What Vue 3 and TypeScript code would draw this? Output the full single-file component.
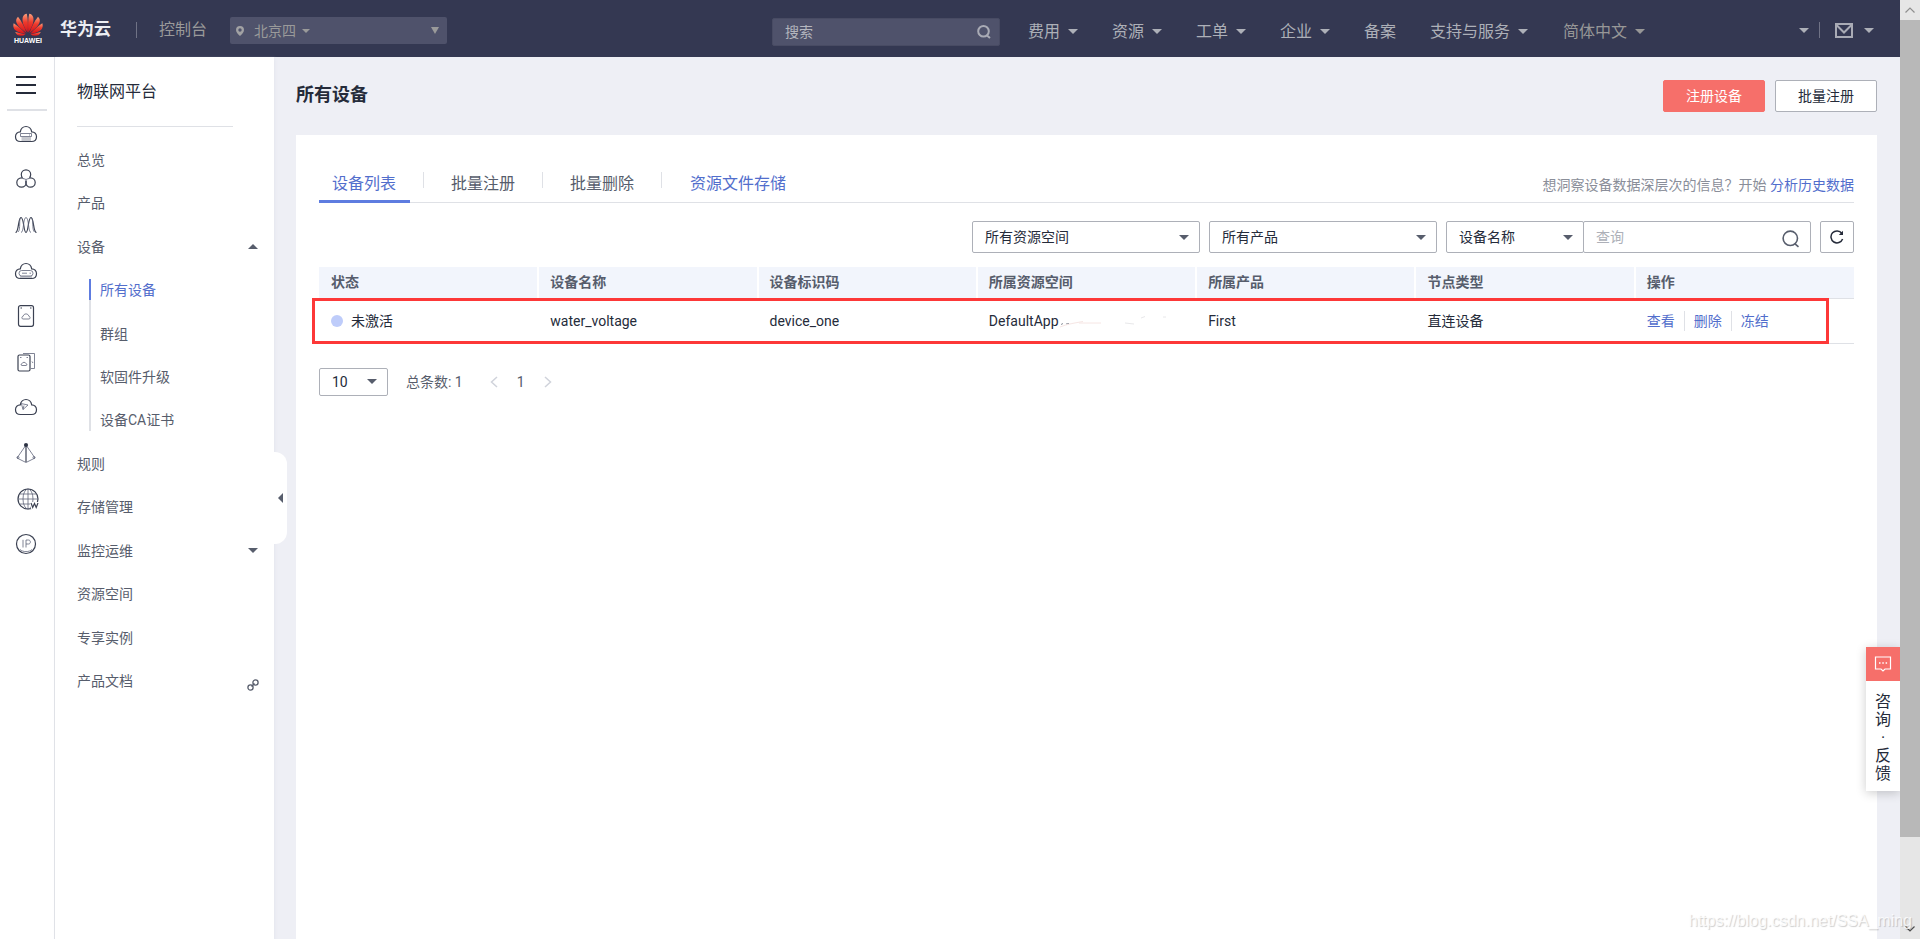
<script setup lang="ts">
import { ref } from 'vue'

interface NavItem {
  label: string
  menu: boolean
}

interface SideItem {
  label: string
  icon?: 'down' | 'link'
}

interface Device {
  status: string
  name: string
  code: string
  space: string
  product: string
  nodeType: string
}

const navItems: NavItem[] = [
  { label: '费用', menu: true },
  { label: '资源', menu: true },
  { label: '工单', menu: true },
  { label: '企业', menu: true },
  { label: '备案', menu: false },
  { label: '支持与服务', menu: true },
]

const topItems: SideItem[] = [{ label: '总览' }, { label: '产品' }]
const deviceItems: string[] = ['所有设备', '群组', '软固件升级', '设备CA证书']
const bottomItems: SideItem[] = [
  { label: '规则' },
  { label: '存储管理' },
  { label: '监控运维', icon: 'down' },
  { label: '资源空间' },
  { label: '专享实例' },
  { label: '产品文档', icon: 'link' },
]

const tabs: string[] = ['设备列表', '批量注册', '批量删除']
const activeTab = ref('设备列表')

const columns: string[] = ['状态', '设备名称', '设备标识码', '所属资源空间', '所属产品', '节点类型', '操作']
const devices: Device[] = [
  { status: '未激活', name: 'water_voltage', code: 'device_one', space: 'DefaultApp', product: 'First', nodeType: '直连设备' },
]
const actions: string[] = ['查看', '删除', '冻结']

const keyword = ref('')
const query = ref('')
</script>

<template>
  <div class="page">
    <div class="app">
      <header class="topbar">
        <a class="logo" href="#" aria-label="HUAWEI">
          <svg class="petals" viewBox="0 0 30 23" aria-hidden="true">
            <defs>
              <linearGradient id="petal" x1="0" y1="0" x2="0" y2="1">
                <stop offset="0" stop-color="#f9a07c" />
                <stop offset="0.45" stop-color="#ee3a2c" />
                <stop offset="1" stop-color="#d5121b" />
              </linearGradient>
            </defs>
            <g fill="url(#petal)">
              <path d="M14.7 19.5C10 13 9 8 9.700 4.500C10.200 2 12 .9 13.800 .7C15 6 15.200 13 14.700 19.500Z" />
              <path d="M15.300 19.500C20 13 21 8 20.300 4.500C19.800 2 18 .9 16.200 .7C15 6 14.800 13 15.300 19.500Z" />
              <path d="M13.600 20C11.500 14 8.500 8 5 3.800C3 5.500 2.500 8 4 10.800C6 14.500 10 17.500 13.600 20Z" />
              <path d="M16.400 20C18.500 14 21.500 8 25 3.800C27 5.500 27.500 8 26 10.800C24 14.500 20 17.500 16.400 20Z" />
              <path d="M12.800 20.700C9 16.500 5 13 .7 10.300C-.2 13 .3 15.500 2.800 17.500C5.500 19.500 9 20.500 12.800 20.700Z" />
              <path d="M17.200 20.700C21 16.500 25 13 29.300 10.300C30.200 13 29.700 15.500 27.200 17.500C24.500 19.500 21 20.500 17.200 20.700Z" />
              <path d="M12.500 21.400C9 20.700 5.500 20 2.200 19C3.500 21.800 5.500 23 8 22.800C9.800 22.600 11.300 22.200 12.500 21.400Z" />
              <path d="M17.500 21.400C21 20.700 24.500 20 27.800 19C26.500 21.800 24.500 23 22 22.800C20.200 22.600 18.700 22.200 17.500 21.400Z" />
            </g>
          </svg>
          <span class="logo-text">HUAWEI</span>
        </a>
        <span class="brand">华为云</span>
        <span class="divider"></span>
        <a class="console" href="#">控制台</a>
        <label class="region">
          <svg class="pin" viewBox="0 0 8 10" aria-hidden="true">
            <path fill-rule="evenodd" d="M4 0a4 4 0 0 1 4 4c0 2.300-2.200 4.600-4 6C2.200 8.600 0 6.300 0 4a4 4 0 0 1 4-4Zm0 2.300a1.700 1.700 0 1 0 0 3.400a1.700 1.700 0 0 0 0-3.400Z" />
          </svg>
          <select aria-label="区域">
            <option>北京四</option>
          </select>
          <i class="caret region-inner"></i>
          <i class="caret big region-outer"></i>
        </label>

        <div class="search">
          <input v-model="keyword" type="text" placeholder="搜索" aria-label="搜索" />
          <button type="button" aria-label="执行搜索">
            <svg viewBox="0 0 14 14" aria-hidden="true">
              <circle cx="6.500" cy="6.300" r="5.300" />
              <path d="M10 10.500L13 13" />
            </svg>
          </button>
        </div>

        <nav class="topnav">
          <a v-for="item in navItems" :key="item.label" href="#">{{ item.label }}<i v-if="item.menu" class="caret"></i></a>
          <a class="lang" href="#">简体中文<i class="caret"></i></a>
        </nav>

        <div class="account">
          <button type="button" aria-label="账号"><i class="caret"></i></button>
          <span class="divider"></span>
          <button type="button" class="mail" aria-label="消息">
            <svg viewBox="0 0 18 15" aria-hidden="true">
              <path d="M1 1H17V14H1ZM1 1.500L9 9.500L17 1.500" />
            </svg>
            <i class="caret"></i>
          </button>
        </div>
      </header>

      <div class="body">
        <aside class="rail">
          <button class="burger" type="button" aria-label="服务列表"><i></i><i></i><i></i></button>
          <ul class="rail-list">
            <li><a href="#" aria-label="云服务器">
              <svg viewBox="0 0 24 24">
                <path d="M6.500 19.500C3.500 19.500 1.500 17.500 1.500 14.700C1.500 12 3.500 9.900 6.300 9.800C6.800 6.800 9.200 4.500 12 4.500S17.200 6.800 17.700 9.800C20.500 9.900 22.500 12 22.500 14.700C22.500 17.500 20.500 19.500 17.500 19.500Z" />
                <path class="fill" d="M7.500 15H17V19H7.500Z" />
                <path class="thin" d="M6.500 11.500H17.500V14.500H6.500Z M15 13H16" />
              </svg>
            </a></li>
            <li><a href="#" aria-label="容器">
              <svg viewBox="0 0 24 24">
                <circle cx="12" cy="7.500" r="4.700" /><circle cx="7.500" cy="15.500" r="4.700" /><circle cx="16.500" cy="15.500" r="4.700" />
                <path class="mask" d="M9 9.500H15L15.500 12L12 14L8.500 12Z" />
                <path class="thin" d="M12 12.500V18M7.500 10.700L12 12.500L16.500 10.700" />
              </svg>
            </a></li>
            <li><a href="#" aria-label="弹性伸缩">
              <svg viewBox="0 0 24 24">
                <path d="M1.500 19.500C5 19.500 4 4.500 7 4.500S9.500 19.500 12 19.500S14 4.500 17 4.500S19 19.500 22.500 19.500" />
                <path class="thin" d="M4 19C7 17 4.500 4.500 7 4.500M7 19.500C10 19.500 9 4.500 12 4.500S14 19.500 17 19.500M17 4.500C20 5 17.500 17 20.500 19" />
              </svg>
            </a></li>
            <li><a href="#" aria-label="裸金属服务器">
              <svg viewBox="0 0 24 24">
                <path d="M6.500 19.500C3.500 19.500 1.500 17.500 1.500 14.700C1.500 12 3.500 9.900 6.300 9.800C6.800 6.800 9.200 4.500 12 4.500S17.200 6.800 17.700 9.800C20.500 9.900 22.500 12 22.500 14.700C22.500 17.500 20.500 19.500 17.500 19.500Z" />
                <rect class="thin" x="5" y="11.500" width="14" height="5.500" rx="2.700" />
                <path class="thin" d="M8 14.200H13M15.500 14.200H17M6 18H18" />
              </svg>
            </a></li>
            <li><a href="#" aria-label="云硬盘">
              <svg viewBox="0 0 24 24">
                <rect x="4.500" y="1.700" width="15" height="20.600" rx="2" />
                <path class="thin" d="M9 15C7.500 15 7.500 12.300 9.300 12.100C9.600 9.200 14.400 9.200 14.700 12.100C16.500 12.300 16.500 15 15 15Z" />
                <path d="M6.500 4H8M16 4H17.500" />
              </svg>
            </a></li>
            <li><a href="#" aria-label="云备份">
              <svg viewBox="0 0 24 24">
                <rect x="4" y="5" width="12" height="16" rx="1.500" />
                <path class="thin" d="M9 3.500H20.500V18.500H17M18 11.500L19 13" />
                <path class="thin" d="M8 15.500C6.800 15.500 6.800 13.800 8 13.700C8.300 11.800 11.700 11.800 12 13.700C13.200 13.800 13.200 15.500 12 15.500Z" />
                <path class="thin" d="M6 7.500H7.500M12.500 7.500H14" />
              </svg>
            </a></li>
            <li><a href="#" aria-label="云加速">
              <svg viewBox="0 0 24 24">
                <path d="M6.500 19.500C3.500 19.500 1.500 17.500 1.500 14.700C1.500 12 3.500 9.900 6.300 9.800C6.800 6.800 9.200 4.500 12 4.500S17.200 6.800 17.700 9.800C20.500 9.900 22.500 12 22.500 14.700C22.500 17.500 20.500 19.500 17.500 19.500Z" />
                <path class="thin" d="M7 8.500L14 10L9 14.500L7.500 9M9 14.500L10 10.500" />
              </svg>
            </a></li>
            <li><a href="#" aria-label="虚拟私有云">
              <svg viewBox="0 0 24 24">
                <path class="thin" d="M12 4L3 17L12 21.500L21 17Z" />
                <path d="M12 4V21" />
                <circle class="solid" cx="12" cy="4" r="1.500" />
                <circle class="thin" cx="4" cy="16.500" r="1" /><circle class="thin" cx="20" cy="16.500" r="1" />
              </svg>
            </a></li>
            <li><a class="shift" href="#" aria-label="域名">
              <svg viewBox="0 0 24 24">
                <circle cx="12" cy="12" r="10" />
                <ellipse class="thin" cx="12" cy="12" rx="5" ry="10" />
                <path class="thin" d="M12 2V22M2 12H22M4 7H20M4 17H14" />
                <path class="mask" d="M14 15H23V22H15Z" />
                <path d="M15 16L16.700 20.500L18.500 16.500L20.200 20.500L22 16" />
              </svg>
            </a></li>
            <li><a href="#" aria-label="弹性公网IP">
              <svg viewBox="0 0 24 24">
                <circle cx="12" cy="12" r="9.500" />
                <path class="thin" d="M9 7.800V15.500M12 15.500V8H14.500C17 8 17 12 14.500 12H12M6 17.500C9 20.300 15 20.300 18 17.500" />
              </svg>
            </a></li>
          </ul>
        </aside>

        <aside class="side">
          <h2>物联网平台</h2>
          <ul class="menu">
            <li v-for="item in topItems" :key="item.label"><a href="#">{{ item.label }}</a></li>
            <li class="group">
              <a href="#">设备<i class="caret up"></i></a>
              <ul class="submenu">
                <li v-for="(item, i) in deviceItems" :key="item" :class="{ active: i === 0 }"><a href="#">{{ item }}</a></li>
              </ul>
            </li>
            <li v-for="item in bottomItems" :key="item.label">
              <a href="#">{{ item.label }}
                <i v-if="item.icon === 'down'" class="caret"></i>
                <svg v-if="item.icon === 'link'" class="link-icon" viewBox="0 0 12 12" aria-hidden="true">
                  <circle cx="3.500" cy="8.500" r="2.600" /><circle cx="8.500" cy="3.500" r="2.600" /><path d="M4.500 7.500L7.500 4.500" />
                </svg>
              </a>
            </li>
          </ul>
          <button class="collapse" type="button" aria-label="收起菜单"><i></i></button>
        </aside>

        <main>
          <div class="title-row">
            <h1>所有设备</h1>
            <button class="btn primary" type="button">注册设备</button>
            <button class="btn" type="button">批量注册</button>
          </div>

          <section class="card">
            <div class="tabs">
              <template v-for="tab in tabs" :key="tab">
                <button type="button" :class="{ active: tab === activeTab }" @click="activeTab = tab">{{ tab }}</button>
                <span class="tab-sep"></span>
              </template>
              <a href="#">资源文件存储</a>
              <p>想洞察设备数据深层次的信息？开始 <a href="#">分析历史数据</a></p>
            </div>

            <div class="filters">
              <label class="select wide">
                <select aria-label="资源空间"><option>所有资源空间</option></select><i class="caret"></i>
              </label>
              <label class="select wide">
                <select aria-label="产品"><option>所有产品</option></select><i class="caret"></i>
              </label>
              <div class="combo">
                <label class="select">
                  <select aria-label="查询字段"><option>设备名称</option></select><i class="caret"></i>
                </label>
                <div class="query">
                  <input v-model="query" type="text" placeholder="查询" aria-label="查询" />
                  <button type="button" aria-label="查询设备">
                    <svg viewBox="0 0 18 18" aria-hidden="true"><circle cx="8.300" cy="8.300" r="7.200" /><path d="M13 13.800L16.500 16.800" /></svg>
                  </button>
                </div>
              </div>
              <button class="refresh" type="button" aria-label="刷新">
                <svg viewBox="0 0 14 14" aria-hidden="true"><path d="M11.800 3.300A6 6 0 1 0 12.600 9" /><path class="tip" d="M13 .8V5H8.800Z" /></svg>
              </button>
            </div>

            <div class="table-wrap">
              <table>
                <thead>
                  <tr><th v-for="column in columns" :key="column" scope="col">{{ column }}</th></tr>
                </thead>
                <tbody>
                  <tr v-for="device in devices" :key="device.code">
                    <td><span class="dot"></span>{{ device.status }}</td>
                    <td>{{ device.name }}</td>
                    <td>{{ device.code }}</td>
                    <td>
                      <span class="space">{{ device.space }}<svg viewBox="0 0 120 18" aria-hidden="true">
                        <path stroke="#8b8f99" d="M2 12.500L4 11.500M7 12L10 11.500" />
                        <path stroke="#f6e6e4" d="M1 15C8 12 16 11 24 9.500M20 11L42 11" />
                        <path stroke="#e8e8ea" d="M66 11L75 12M82 6L86 4.500M104 5L107 5" />
                      </svg></span>
                    </td>
                    <td>{{ device.product }}</td>
                    <td>{{ device.nodeType }}</td>
                    <td><span class="actions"><a v-for="action in actions" :key="action" href="#">{{ action }}</a></span></td>
                  </tr>
                </tbody>
              </table>
              <div class="highlight"></div>
            </div>

            <div class="pager">
              <label class="select small">
                <select aria-label="每页条数"><option>10</option></select><i class="caret"></i>
              </label>
              <span class="total">总条数: 1</span>
              <button type="button" aria-label="上一页"><svg viewBox="0 0 8 12"><path d="M7 1L1.500 6L7 11" /></svg></button>
              <button type="button" class="num">1</button>
              <button type="button" aria-label="下一页"><svg viewBox="0 0 8 12"><path d="M1 1L6.500 6L1 11" /></svg></button>
            </div>
          </section>
        </main>
      </div>

      <aside class="feedback">
        <button type="button" aria-label="咨询">
          <svg viewBox="0 0 18 16" aria-hidden="true">
            <path d="M1.500 1H16.500V13H11L9 15L7 13H1.500Z" /><path class="dots" d="M5 7H6.500M8.300 7H9.800M11.600 7H13.100" />
          </svg>
        </button>
        <a href="#"><span>咨</span><span>询</span><span>·</span><span>反</span><span>馈</span></a>
      </aside>
    </div>

    <div class="scrollbar" aria-hidden="true">
      <svg viewBox="0 0 12 8"><path d="M1.500 6.500L6 2L10.500 6.500" /></svg>
      <div class="thumb"></div>
      <div class="track"></div>
      <svg viewBox="0 0 12 8"><path class="dark" d="M1.500 1.500L6 6L10.500 1.500" /></svg>
    </div>
    <div class="watermark">https://blog.csdn.net/SSA_ming</div>
  </div>
</template>

<style>
html,
body {
  margin: 0;
  overflow: hidden;
}
</style>

<style scoped>
.page {
  position: relative;
  display: flex;
  height: 100vh;
  min-width: 1400px;
  overflow: hidden;
  background: #eeeff5;
  color: #252b3a;
  font: 14px/20px Roboto, "Noto Sans CJK SC", sans-serif;
}
*,
*::before {
  box-sizing: border-box;
}
a {
  color: inherit;
  text-decoration: none;
}
button,
input,
select {
  margin: 0;
  padding: 0;
  border: 0;
  background: none;
  color: inherit;
  font: inherit;
}
select {
  appearance: none;
}
ul {
  margin: 0;
  padding: 0;
  list-style: none;
}
svg {
  display: block;
  fill: none;
}
.caret {
  flex: none;
  border: 5px solid transparent;
  border-top-color: currentColor;
  border-bottom: 0;
}
.caret.big {
  border-top-width: 7px;
}
.caret.up {
  border-top: 0;
  border-bottom: 5px solid currentColor;
}
.app {
  position: relative;
  display: flex;
  flex: 1;
  flex-direction: column;
}

/* Top bar */
.topbar {
  display: flex;
  align-items: center;
  height: 57px;
  padding: 0 26px 0 13px;
  background: #343852;
  color: #adb0b8;
  font-size: 16px;
}
.logo {
  display: flex;
  flex-direction: column;
  align-items: center;
  width: 30px;
}
.petals {
  width: 30px;
  height: 23px;
}
.logo-text {
  color: #fff;
  font: bold 7px/9px "Liberation Sans", sans-serif;
}
.brand {
  margin-left: 17px;
  color: #eceef2;
  font-size: 17px;
  font-weight: 700;
}
.divider {
  width: 1px;
  height: 16px;
  background: #6f7285;
}
.brand + .divider {
  margin: 2px 22px 0 25px;
}
.console {
  margin-top: 2px;
  color: #9a9a9a;
}
.region {
  position: relative;
  display: flex;
  align-items: center;
  width: 217px;
  height: 27px;
  margin: 4px 0 0 23px;
  border-radius: 2px;
  background: #4f526b;
  color: #9a9a9a;
  font-size: 14px;
}
.region select {
  width: 100%;
  height: 27px;
  padding-left: 24px;
}
.pin {
  position: absolute;
  left: 6px;
  width: 8px;
  height: 10px;
  fill: #a2a2a4;
}
.region-inner {
  position: absolute;
  left: 72px;
  border-width: 4px 4px 0;
}
.region-outer {
  position: absolute;
  right: 8px;
  border-width: 7px 4px 0;
}
.search {
  display: flex;
  width: 228px;
  height: 28px;
  margin: 6px 0 0 auto;
  border: 1px solid #484b63;
  border-radius: 2px;
  background: #4f526b;
  font-size: 14px;
}
.search input {
  flex: 1;
  min-width: 0;
  padding-left: 12px;
}
.search input::placeholder {
  color: #b4b6be;
}
.search button {
  width: 29px;
}
.search svg {
  width: 14px;
  height: 14px;
  margin-left: 7px;
  stroke: #a9abb5;
  stroke-width: 2;
}
.topnav {
  display: flex;
  gap: 34px;
  margin: 6px 0 0 28px;
}
.topnav a {
  display: flex;
  align-items: center;
  gap: 8px;
}
.topnav .lang {
  margin-left: 1px;
  color: #979797;
}
.account {
  display: flex;
  align-items: center;
  gap: 10px;
  margin: 3px 0 0 154px;
}
.mail {
  display: flex;
  align-items: center;
  gap: 11px;
  margin-left: 5px;
}
.account button {
  display: flex;
  align-items: center;
}
.mail svg {
  width: 18px;
  height: 15px;
  stroke: #a9abb5;
  stroke-width: 2;
}

.body {
  display: flex;
  flex: 1;
  min-height: 0;
}

/* Icon rail */
.rail {
  width: 55px;
  border-right: 1px solid #dfe1e6;
  background: #fff;
}
.burger {
  display: flex;
  flex-direction: column;
  justify-content: center;
  gap: 6px;
  width: 40px;
  height: 54px;
  margin: 0 7px;
  padding: 4px 9px 0;
  border-bottom: 2px solid #dfe1e6;
}
.burger i {
  width: 20px;
  height: 2px;
  background: #252b3a;
}
.rail-list {
  display: grid;
  grid-auto-rows: 1fr;
  height: 456px;
}
.rail-list li {
  display: flex;
  align-items: center;
  padding-left: 14px;
}
.rail-list .shift {
  padding-left: 2px;
}
.rail-list svg {
  width: 24px;
  height: 24px;
  stroke: #3b4152;
  stroke-width: 1.2;
}
.rail-list .thin {
  stroke: #60657a;
  stroke-width: 0.8;
}
.rail-list .fill {
  fill: #c6c8ce;
  stroke: none;
}
.rail-list .mask {
  fill: #fff;
  stroke: none;
}
.rail-list .solid {
  fill: #252b3a;
}

/* Side menu */
.side {
  position: relative;
  width: 219px;
  padding: 0 17px 0 22px;
  background: #fff;
  box-shadow: 1px 2px 3px #e4e6ee;
}
.side h2 {
  height: 70px;
  margin: 0 24px 0 0;
  padding-top: 25px;
  border-bottom: 1px solid #dfe1e6;
  font-size: 16px;
  font-weight: 400;
  line-height: 20px;
}
.menu {
  display: grid;
  grid-auto-rows: 1fr;
  height: 565px;
  margin-top: 11px;
  color: #575d6c;
}
.menu a {
  display: flex;
  align-items: center;
  justify-content: space-between;
  height: 100%;
}
.group {
  display: grid;
  grid-row: span 5;
  grid-template-rows: 1fr 4fr;
}
.submenu {
  position: relative;
  display: grid;
  grid-auto-rows: 1fr;
  margin-left: 12px;
}
.submenu::before {
  position: absolute;
  top: 11px;
  bottom: 11px;
  width: 2px;
  background: #dfe1e6;
  content: "";
}
.submenu li {
  position: relative;
  padding-left: 11px;
}
.submenu .active {
  color: #526ecc;
}
.submenu .active::before {
  position: absolute;
  top: 11px;
  left: 0;
  width: 2px;
  height: 21px;
  background: #5e7ce0;
  content: "";
}
.menu .caret {
  margin-right: -1px;
}
.link-icon {
  width: 12px;
  height: 12px;
  margin: 8px -2px 0 0;
  stroke: #575d6c;
  stroke-width: 1.3;
}
.collapse {
  position: absolute;
  z-index: 1;
  top: 395px;
  left: 100%;
  width: 13px;
  height: 92px;
  border-radius: 0 12px 12px 0;
  background: #fff;
}
.collapse i {
  display: block;
  width: 0;
  margin-left: 4px;
  border: 5px solid transparent;
  border-right-color: #575d6c;
  border-left: 0;
}

/* Content */
main {
  display: flex;
  flex: 1;
  flex-direction: column;
  min-width: 0;
  padding: 0 23px 0 22px;
}
.title-row {
  display: flex;
  align-items: center;
  gap: 10px;
  height: 78px;
}
h1 {
  margin: 0 auto 2px 0;
  font-size: 18px;
  line-height: 26px;
}
.btn {
  width: 102px;
  height: 32px;
  border: 1px solid #adb0b8;
  border-radius: 2px;
  background: #fff;
}
.btn.primary {
  border-color: #f66f6a;
  background: #f66f6a;
  color: #fff;
}
.card {
  flex: 1;
  padding: 25px 23px;
  background: #fff;
}
.tabs {
  display: flex;
  align-items: center;
  height: 43px;
  border-bottom: 1px solid #dfe1e6;
  color: #575d6c;
  font-size: 16px;
}
.tabs button {
  height: 43px;
  padding: 8px 14px 0 13px;
  border-bottom: 3px solid transparent;
}
.tabs button.active {
  border-color: #5e7ce0;
  color: #526ecc;
}
.tab-sep {
  width: 1px;
  height: 16px;
  margin: 0 14px 2px 13px;
  background: #dfe1e6;
}
.tabs > a {
  padding: 6px 14px 0;
  color: #526ecc;
}
.tabs p {
  margin: 8px 0 0 auto;
  color: #8a8e99;
  font-size: 14px;
}
.tabs p a {
  color: #526ecc;
}
.filters {
  display: flex;
  justify-content: flex-end;
  gap: 9px;
  margin: 18px 0 14px;
}
.select {
  position: relative;
  display: flex;
  align-items: center;
  width: 138px;
  height: 32px;
  border: 1px solid #adb0b8;
  border-radius: 2px;
  background: #fff;
}
.select select {
  width: 100%;
  height: 100%;
  padding-left: 12px;
}
.select .caret {
  position: absolute;
  right: 10px;
  color: #575d6c;
}
.select.wide {
  width: 228px;
}
.select.small {
  width: 69px;
  height: 28px;
}
.combo {
  display: flex;
}
.query {
  display: flex;
  width: 228px;
  height: 32px;
  margin-left: -1px;
  border: 1px solid #adb0b8;
  border-radius: 2px;
}
.query input {
  flex: 1;
  min-width: 0;
  padding-left: 12px;
}
.query input::placeholder {
  color: #adb0b8;
}
.query button {
  width: 32px;
  padding-top: 3px;
}
.query svg {
  width: 18px;
  height: 18px;
  margin-left: 4px;
  stroke: #575d6c;
  stroke-width: 1.600;
}
.refresh {
  display: flex;
  align-items: center;
  justify-content: center;
  width: 34px;
  height: 32px;
  border: 1px solid #adb0b8;
  border-radius: 2px;
}
.refresh svg {
  width: 14px;
  height: 14px;
  stroke: #252b3a;
  stroke-width: 1.500;
}
.refresh .tip {
  fill: #252b3a;
  stroke: none;
}

.table-wrap {
  position: relative;
}
table {
  width: 100%;
  border-collapse: collapse;
  table-layout: fixed;
}
th,
td {
  padding: 0 0 0 12px;
  border-bottom: 1px solid #dfe1e6;
  text-align: left;
}
th {
  height: 31px;
  background: #f2f5fc;
  color: #575d6c;
  font-weight: 700;
}
th + th {
  border-left: 2px solid #fff;
  padding-left: 11px;
}
td {
  height: 45px;
}
.dot {
  display: inline-block;
  width: 12px;
  height: 12px;
  margin-right: 8px;
  border-radius: 50%;
  background: #beccfa;
  vertical-align: -1px;
}
.space {
  display: flex;
  align-items: center;
}
.space svg {
  width: 120px;
  height: 18px;
}
.actions {
  display: flex;
  color: #526ecc;
}
.actions a + a {
  margin-left: 9px;
  padding-left: 9px;
  border-left: 1px solid #dfe1e6;
}
.highlight {
  position: absolute;
  top: 31px;
  right: 25px;
  bottom: 0;
  left: -7px;
  border: 3px solid #fd3838;
  pointer-events: none;
}
.pager {
  display: flex;
  align-items: center;
  margin-top: 24px;
  color: #575d6c;
}
.pager .select {
  color: #252b3a;
}
.total {
  margin: 0 27px 0 18px;
}
.pager svg {
  width: 8px;
  height: 12px;
  stroke: #d0d3db;
  stroke-width: 1.500;
}
.num {
  margin: 0 19px;
}

/* Feedback tab */
.feedback {
  position: absolute;
  top: 647px;
  right: 0;
  width: 34px;
  background: #fff;
  box-shadow: 0 2px 10px rgba(0, 0, 0, 0.2);
  color: #252b3a;
  font-size: 16px;
  clip-path: inset(-12px 0 -14px -12px);
}
.feedback button {
  display: flex;
  align-items: center;
  justify-content: center;
  width: 34px;
  height: 34px;
  background: #f66f6a;
}
.feedback svg {
  width: 18px;
  height: 16px;
  stroke: #fff;
  stroke-width: 1.200;
}
.feedback .dots {
  stroke-width: 1.500;
}
.feedback a {
  display: flex;
  flex-direction: column;
  align-items: center;
  padding: 12px 0 8px;
}
.feedback a span {
  height: 18px;
  line-height: 18px;
}

/* Page scrollbar */
.scrollbar {
  display: flex;
  flex-direction: column;
  align-items: center;
  width: 20px;
  background: #e6e6e6;
}
.scrollbar svg {
  width: 12px;
  height: 8px;
  margin: 6px 0;
  stroke: #8f8f8f;
  stroke-width: 1.200;
}
.scrollbar .dark {
  stroke: #505050;
}
.thumb {
  flex: 817;
  width: 20px;
  background: #b8b8b8;
}
.track {
  flex: 82;
}
.watermark {
  position: absolute;
  right: 8px;
  bottom: 8px;
  color: rgba(255, 255, 255, 0.8);
  font: 16px/20px "Liberation Sans", sans-serif;
  text-shadow: 1px 1px 1px rgba(0, 0, 0, 0.2);
}
</style>
